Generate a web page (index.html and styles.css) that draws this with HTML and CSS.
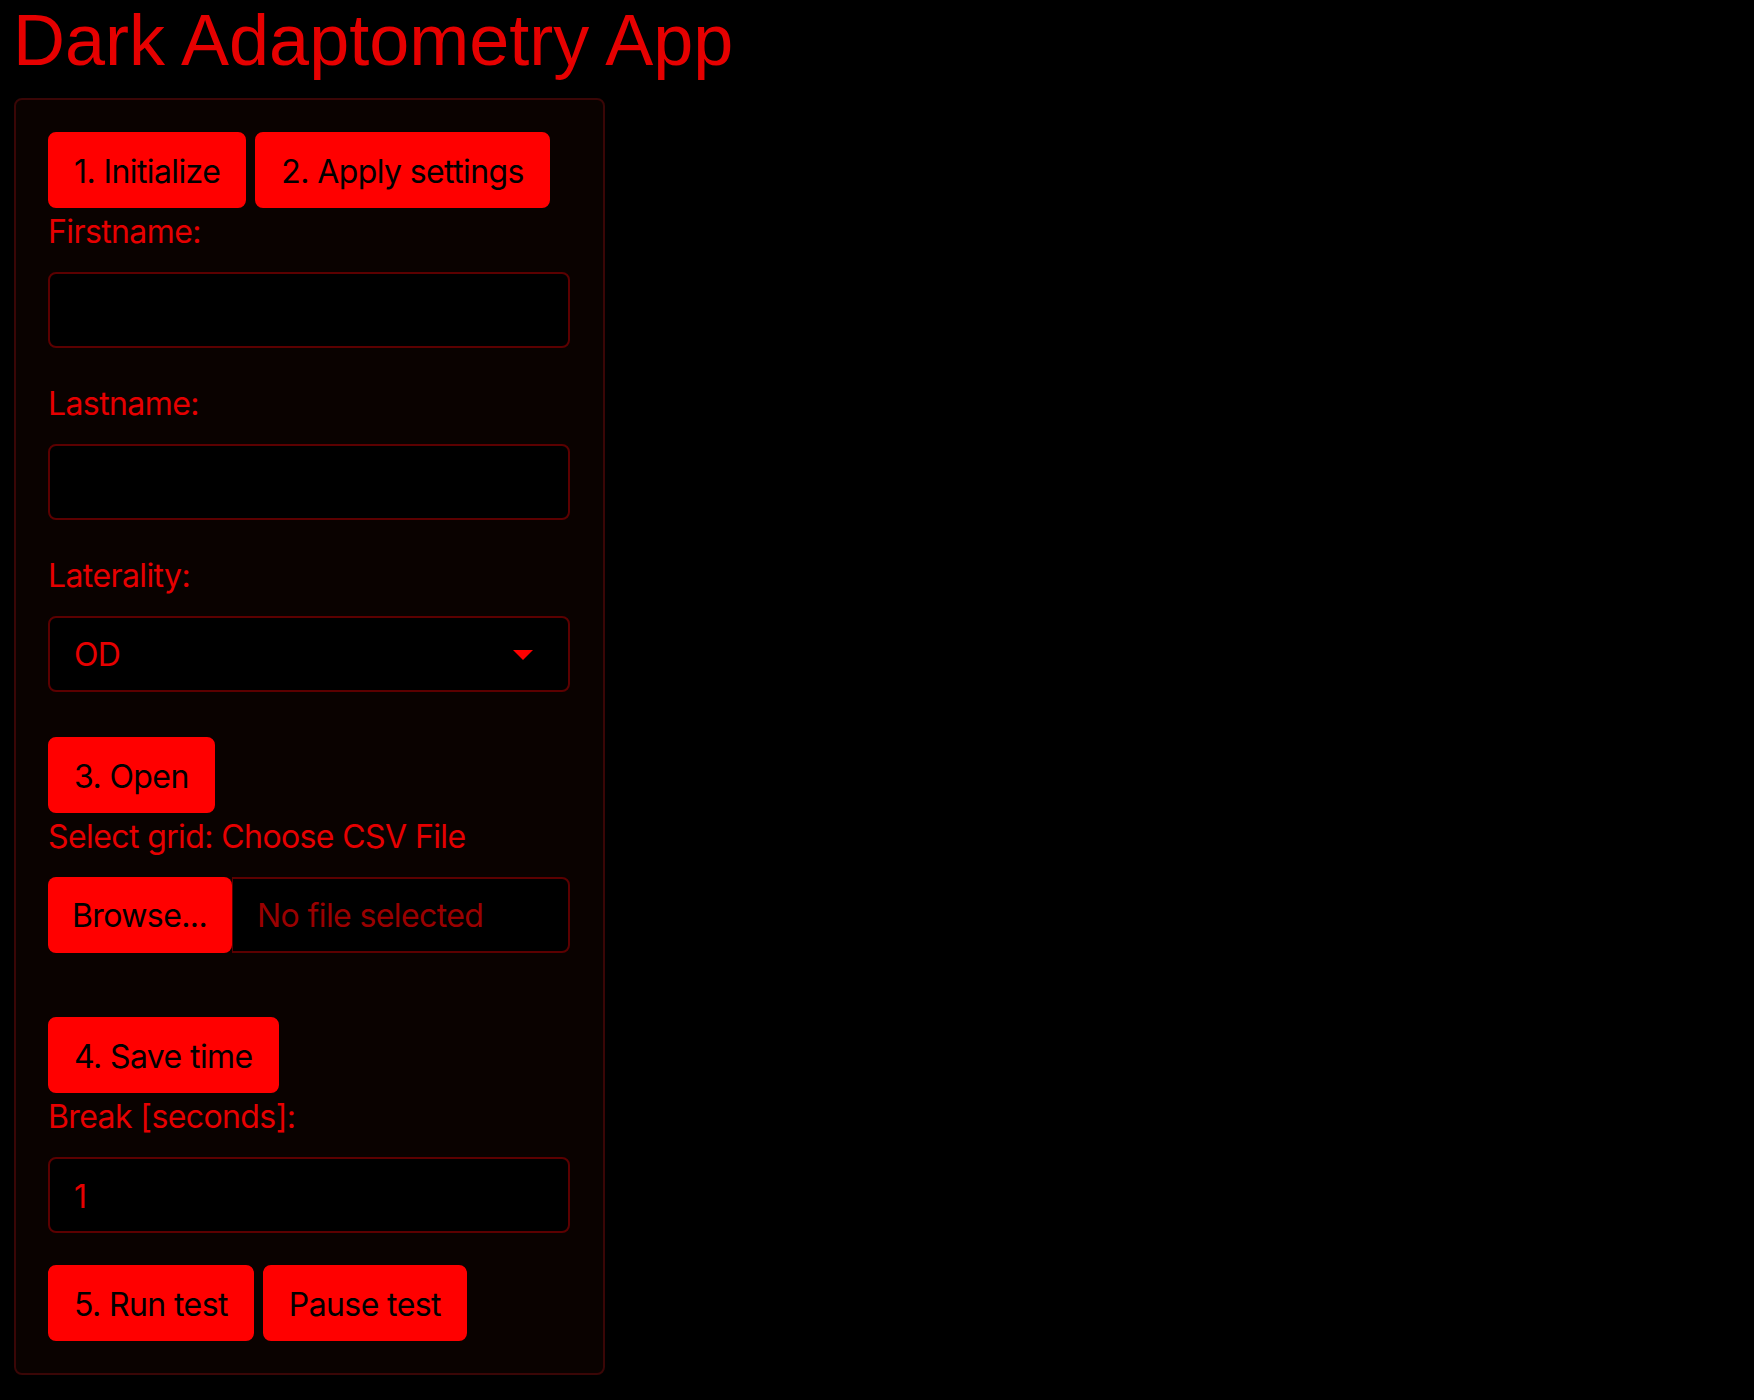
FILE: index.html
```html
<!DOCTYPE html>
<html lang="en">
<head>
<meta charset="utf-8">
<title>Dark Adaptometry App</title>
<link rel="stylesheet" href="styles.css">
</head>
<body>
<div class="page">
  <h1 class="title">Dark Adaptometry App</h1>
  <div class="panel">
    <div class="btn-row">
      <button class="btn">1. Initialize</button>
      <button class="btn">2. Apply settings</button>
    </div>
    <div class="form-group">
      <label class="label">Firstname:</label>
      <input class="control" type="text">
    </div>
    <div class="form-group">
      <label class="label">Lastname:</label>
      <input class="control" type="text">
    </div>
    <div class="form-group select-group">
      <label class="label">Laterality:</label>
      <div class="control select">
        <span>OD</span>
        <svg class="caret" width="20" height="10" viewBox="0 0 20 10"><path d="M0 0H20L10 10Z" fill="#ff0000"/></svg>
      </div>
    </div>
    <div class="btn-row">
      <button class="btn">3. Open</button>
    </div>
    <div class="form-group file-group">
      <label class="label">Select grid: Choose CSV File</label>
      <div class="file">
        <span class="file-btn">Browse...</span>
        <span class="file-name">No file selected</span>
      </div>
    </div>
    <div class="btn-row">
      <button class="btn">4. Save time</button>
    </div>
    <div class="form-group">
      <label class="label">Break [seconds]:</label>
      <input class="control" type="text" value="1">
    </div>
    <div class="btn-row">
      <button class="btn">5. Run test</button>
      <button class="btn">Pause test</button>
    </div>
  </div>
</div>
</body>
</html>
```

FILE: styles.css
```css
html, body {
  margin: 0;
  padding: 0;
  background: #000000;
}
body {
  font-family: Inter, "Noto Sans", sans-serif;
  font-size: 32px;
  line-height: 48px;
  letter-spacing: -0.6px;
  color: #e60000;
}
.page {
  padding: 0 14px;
}
.title {
  margin: 0 0 18px -1px;
  font-family: "Liberation Sans", Arial, sans-serif;
  font-weight: 400;
  font-size: 72px;
  line-height: 80px;
  letter-spacing: 0;
  color: #e60000;
}
.panel {
  box-sizing: border-box;
  width: 591px;
  border: 2px solid #3a0606;
  border-radius: 8px;
  background: #0a0200;
  padding: 32px;
}
.btn-row {
  display: flex;
  gap: 9px;
}
.btn {
  box-sizing: border-box;
  height: 76px;
  padding: 14px 24px 10px;
  border: 2px solid #ff0000;
  border-radius: 8px;
  background: #ff0000;
  color: #000000;
  font-family: inherit;
  font-size: 32px;
  line-height: 48px;
  letter-spacing: -0.6px;
}
.form-group {
  margin-bottom: 32px;
}
.select-group {
  margin-bottom: 45px;
}
.file-group {
  margin-bottom: 64px;
}
.label {
  display: block;
  margin-bottom: 16px;
  color: #e60000;
}
.control {
  box-sizing: border-box;
  display: block;
  width: 522px;
  height: 76px;
  margin: 0;
  padding: 13px 24px 11px;
  border: 2px solid #5c0000;
  border-radius: 8px;
  background: #000000;
  color: #e60000;
  font-family: inherit;
  font-size: 32px;
  line-height: 48px;
  letter-spacing: -0.6px;
  outline: none;
}
.select {
  display: flex;
  align-items: center;
  justify-content: space-between;
  padding-right: 35px;
}
.file {
  display: flex;
  width: 522px;
  height: 76px;
}
.file-btn {
  box-sizing: border-box;
  width: 184px;
  height: 76px;
  padding: 15px 24px 13px;
  background: #ff0000;
  color: #000000;
  border-radius: 8px;
  white-space: nowrap;
}
.file-name {
  box-sizing: border-box;
  flex: 1;
  height: 76px;
  padding: 13px 24px 11px;
  border: 2px solid #5c0000;
  border-left-width: 1px;
  border-radius: 0 8px 8px 0;
  background: #000000;
  color: #9a0000;
  white-space: nowrap;
}
```
